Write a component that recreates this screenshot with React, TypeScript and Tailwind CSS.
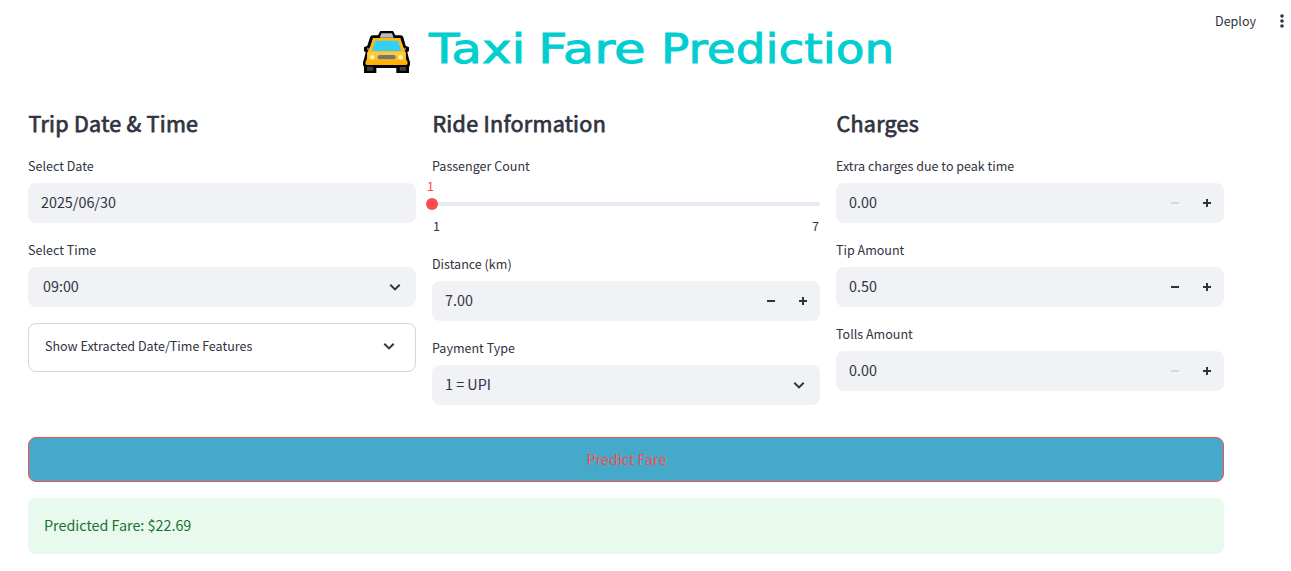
import type { ReactNode } from "react";

function TaxiIcon() {
  return (
    <svg width="47" height="42" viewBox="0 0 141 126" aria-hidden="true" className="shrink-0">
      <path
        d="M52 0H90L97 13H113Q119 13 121 19L128 44L138 49V60L133 64L138 84L141 94V103L138 107V126H100V111H40V126H3V107L0 103V94L3 84L8 64L3 60V49L13 44L21 19Q23 13 29 13H45Z"
        fill="#000"
      />
      <path d="M55 7H87L92 20H50Z" fill="#bcbcbc" />
      <path d="M12 107H31V119H12ZM110 107H129V119H110Z" fill="#3f3f3f" />
      <path d="M12 50L20 50V57H12ZM121 50H129V57H121Z" fill="#6b6b6b" />
      <path d="M30 21H112L121 48L128 64L130 91H11L13 64L21 48Z" fill="#ffb916" />
      <path d="M15 62H126L129 74H12Z" fill="#ffc83d" />
      <path d="M37 29H105L115 60H27Z" fill="#32cffa" />
      <path d="M12 74H129V91H12Z" fill="#fcc02c" />
      <path d="M9 88H132L134 96Q134 102 129 102H12Q7 102 7 96Z" fill="#ffb000" />
      <rect x="44" y="72" width="54" height="13" rx="6.5" fill="#747474" />
      <circle cx="28" cy="79" r="7" fill="#fff8a5" />
      <circle cx="113" cy="79" r="7" fill="#fff8a5" />
    </svg>
  );
}

function Chevron({ size = 20 }: { size?: number }) {
  return (
    <svg width={size} height={size} viewBox="0 0 20 20" fill="none" stroke="#31333f" strokeWidth="2" aria-hidden="true">
      <path d="M5.3 7.7 10 12.4l4.7-4.7" />
    </svg>
  );
}

function Field({ label, children }: { label: string; children: ReactNode }) {
  return (
    <div className="flex flex-col gap-1">
      <div className="h-6 text-[12.54px] leading-[21px]">{label}</div>
      {children}
    </div>
  );
}

function Box({ value, children, inset = "pl-[13px]" }: { value: string; children?: ReactNode; inset?: string }) {
  return (
    <div className={`flex h-10 items-center justify-between rounded-lg bg-[#f0f2f6] ${inset}`}>
      <span className="pb-[2px] text-[14.33px] leading-6">{value}</span>
      {children}
    </div>
  );
}

function NumberBox({ value, atMin = false }: { value: string; atMin?: boolean }) {
  return (
    <Box value={value}>
      <div className="flex pr-px">
        <button className="flex h-10 w-8 items-center justify-center">
          <svg width="8" height="8" viewBox="0 0 8 8" aria-label="Decrease">
            <path d="M0 3h8v2H0z" fill={atMin ? "#d6d7e1" : "#31333f"} />
          </svg>
        </button>
        <button className="flex h-10 w-8 items-center justify-center">
          <svg width="8" height="8" viewBox="0 0 8 8" aria-label="Increase">
            <path d="M0 3h3V0h2v3h3v2H5v3H3V5H0z" fill="#31333f" />
          </svg>
        </button>
      </div>
    </Box>
  );
}

function SelectBox({ value, inset }: { value: string; inset?: string }) {
  return (
    <Box value={value} inset={inset}>
      <span className="pr-[11px]">
        <Chevron />
      </span>
    </Box>
  );
}

function Column({ title, children }: { title: string; children: ReactNode }) {
  return (
    <section>
      <h3 className="h-[47px] pl-[0.4px] text-[21.5px] leading-[30px] font-normal tracking-[0.29px] [-webkit-text-stroke:0.75px_#31333f]">
        {title}
      </h3>
      <div className="flex flex-col gap-4">{children}</div>
    </section>
  );
}

export default function App() {
  return (
    <div className="relative h-[571px] overflow-hidden bg-white font-['Noto_Sans_CJK_SC','Noto_Sans',sans-serif] text-[#31333f]">
      <div className="absolute top-[11px] right-0 flex items-center">
        <span className="mr-[23px] text-[12.54px] leading-5">Deploy</span>
        <svg width="6" height="14" viewBox="0 0 6 14" fill="#31333f" className="mr-[6px]" aria-hidden="true">
          <circle cx="3" cy="2" r="1.8" />
          <circle cx="3" cy="7" r="1.8" />
          <circle cx="3" cy="12" r="1.8" />
        </svg>
      </div>

      <main className="ml-7 w-[1196px]">
        <header className="flex h-[108px] items-start pt-[31px] pl-[335px]">
          <TaxiIcon />
          <h1 className="ml-[19px] flex h-[42px] font-['DejaVu_Sans',sans-serif] text-[41px] leading-[37px] whitespace-pre text-[#00ced1] [-webkit-text-stroke:0.9px_#00ced1]">
            <span className="w-[109px] origin-left scale-x-[1.22]">Taxi </span>
            <span className="w-[123px] origin-left scale-x-[1.25]">Fare </span>
            <span className="origin-left scale-x-[1.145]">Prediction</span>
          </h1>
        </header>

        <div className="grid h-[329px] grid-cols-3 gap-4">
          <Column title="Trip Date & Time">
            <Field label="Select Date">
              <Box value="2025/06/30" />
            </Field>
            <Field label="Select Time">
              <SelectBox value="09:00" inset="pl-[15px]" />
            </Field>
            <div className="flex h-[49px] items-center justify-between rounded-lg border border-[#d5d6d9] pr-4 pl-4">
              <span className="pb-1 text-[12.54px] leading-5">Show Extracted Date/Time Features</span>
              <span className="pb-1">
                <Chevron />
              </span>
            </div>
          </Column>

          <Column title="Ride Information">
            <div className="h-[82px]">
              <div className="h-6 text-[12.54px] leading-[21px]">Passenger Count</div>
              <div className="-ml-[5px] h-[19px] text-[12.54px] leading-[13px] text-[#ff4b4b]">1</div>
              <div className="-ml-1.5 flex h-3 items-center">
                <div className="size-3 rounded-full bg-[#ff4b4b]" />
                <div className="h-1 flex-1 rounded-r-full bg-[#e6eaf1]" />
              </div>
              <div className="flex justify-between pr-px pl-px text-[12.54px] leading-[31px]">
                <span>1</span>
                <span>7</span>
              </div>
            </div>
            <Field label="Distance (km)">
              <NumberBox value="7.00" />
            </Field>
            <Field label="Payment Type">
              <SelectBox value="1 = UPI" />
            </Field>
          </Column>

          <Column title="Charges">
            <Field label="Extra charges due to peak time">
              <NumberBox value="0.00" atMin />
            </Field>
            <Field label="Tip Amount">
              <NumberBox value="0.50" />
            </Field>
            <Field label="Tolls Amount">
              <NumberBox value="0.00" atMin />
            </Field>
          </Column>
        </div>

        <button className="flex h-[45px] w-full items-center justify-center rounded-lg border border-[#ff4b4b] bg-[#45a9c9] pb-[2px] pl-px text-[14.33px] leading-6 text-[#ff4b4b]">
          Predict Fare
        </button>
        <div className="mt-4 flex h-14 items-center rounded-lg bg-[#e8f9ee] pb-[2px] pl-4 text-[14.33px] leading-6 text-[#177233]">
          Predicted Fare: $22.69
        </div>
      </main>
    </div>
  );
}
